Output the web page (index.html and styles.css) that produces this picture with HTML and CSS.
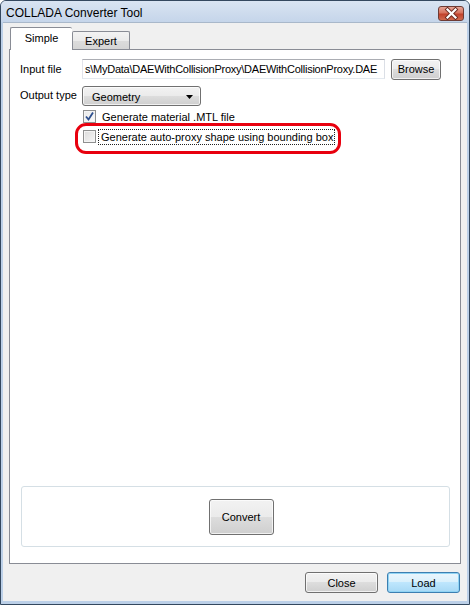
FILE: index.html
```html
<!DOCTYPE html>
<html>
<head>
<meta charset="utf-8">
<link rel="stylesheet" href="styles.css">
</head>
<body>
<div class="window">
  <div class="titlebar">
    <span class="title">COLLADA Converter Tool</span>
    <div class="close-x">
      <svg width="25" height="15" viewBox="0 0 25 15">
        <path d="M8.5 3.5 L16.5 11.5 M16.5 3.5 L8.5 11.5" stroke="#6b2a20" stroke-width="4" stroke-linecap="square"/>
        <path d="M8.5 3.5 L16.5 11.5 M16.5 3.5 L8.5 11.5" stroke="#ffffff" stroke-width="2.2" stroke-linecap="square"/>
      </svg>
    </div>
  </div>
  <div class="client">
    <div class="tabs">
      <div class="tab active">Simple</div>
      <div class="tab">Expert</div>
    </div>
    <div class="pane">
      <div class="row">
        <span class="label">Input file</span>
        <div class="textfield">s\MyData\DAEWithCollisionProxy\DAEWithCollisionProxy.DAE</div>
        <div class="btn browse">Browse</div>
      </div>
      <div class="row row2">
        <span class="label">Output type</span>
        <div class="combo">
          <span>Geometry</span>
          <svg width="7" height="4" viewBox="0 0 7 4"><path d="M0 0 H7 L3.5 4 Z" fill="#000"/></svg>
        </div>
      </div>
      <div class="check-row first">
        <span class="box checked">
          <svg width="11" height="11" viewBox="0 0 11 11"><path d="M2 5.5 L4.5 8.5 L9 1.5" stroke="#2d4f8e" stroke-width="1.8" fill="none"/></svg>
        </span>
        <span class="check-text">Generate material .MTL file</span>
      </div>
      <div class="check-row second">
        <span class="box"></span>
        <span class="check-text focus">Generate auto-proxy shape using bounding box</span>
        <div class="highlight"></div>
      </div>
      <div class="spacer"></div>
      <div class="group">
        <div class="btn convert">Convert</div>
      </div>
    </div>
    <div class="footer">
      <div class="btn footbtn">Close</div>
      <div class="btn footbtn default">Load</div>
    </div>
  </div>
</div>
</body>
</html>
```

FILE: styles.css
```css
html, body {
  margin: 0;
  padding: 0;
  background: #ffffff;
}

body {
  font-family: "Liberation Sans", Arial, sans-serif;
  font-size: 11px;
  color: #000;
}

.window {
  width: 470px;
  height: 605px;
  box-sizing: border-box;
  display: flex;
  flex-direction: column;
  background: #bcd0e8;
  border: 1px solid #34485f;
  border-radius: 6px 6px 0 0;
  padding: 0 2px 3px 2px;
}

.titlebar {
  height: 22px;
  display: flex;
  align-items: center;
  justify-content: space-between;
  margin: 0 -2px;
  padding: 0 5px 0 5px;
  background: linear-gradient(#d9e4f2, #c5d5ea);
  border-radius: 5px 5px 0 0;
}

.title {
  font-size: 12px;
  color: #000;
  padding-top: 2px;
}

.close-x {
  width: 26px;
  height: 15px;
  margin-top: 3px;
  margin-right: 0;
  box-sizing: border-box;
  border: 1px solid #6e3b34;
  border-radius: 3px;
  background: linear-gradient(#e6a596 0%, #d7725d 45%, #c2412b 55%, #cf6a4f 100%);
  display: flex;
  align-items: center;
  justify-content: center;
  overflow: hidden;
}

.close-x svg {
  display: block;
  margin: -1px;
}

.client {
  flex: 1;
  display: flex;
  flex-direction: column;
  background: #f0f0f0;
  padding: 0 6px 8px 6px;
  border-top: 1px solid #a9b8ca;
}

.tabs {
  display: flex;
  align-items: flex-end;
  height: 20px;
  margin-top: 6px;
  padding-left: 1px;
  position: relative;
  z-index: 2;
}

.tab {
  box-sizing: border-box;
  height: 18px;
  width: 58px;
  border: 1px solid #898c95;
  border-bottom: none;
  border-radius: 2px 2px 0 0;
  background: linear-gradient(#f3f3f3, #ebebeb 50%, #dcdcdc 51%, #d5d5d5);
  display: flex;
  align-items: center;
  justify-content: center;
  padding-top: 1px;
}

.tab.active {
  width: 62px;
  height: 23px;
  margin-bottom: -1px;
  background: #ffffff;
  padding-bottom: 3px;
  border-right: none;
}

.pane {
  height: 515px;
  box-sizing: border-box;
  border: 1px solid #898c95;
  background: #ffffff;
  padding: 9px 10px 16px 10px;
  display: flex;
  flex-direction: column;
}

.row {
  display: flex;
  align-items: center;
  height: 20px;
}

.row2 {
  margin-top: 7px;
}

.label {
  width: 62px;
  flex: none;
}

.row2 .label {
  margin-top: -2px;
}

.textfield {
  box-sizing: border-box;
  width: 303px;
  height: 20px;
  border: 1px solid #abadb3;
  border-left-color: #e2e3ea;
  border-right-color: #dbdfe6;
  border-bottom-color: #e3e9ef;
  background: #fff;
  padding: 0 2px;
  display: flex;
  align-items: center;
  letter-spacing: -0.25px;
  white-space: nowrap;
  overflow: hidden;
}

.btn {
  box-sizing: border-box;
  border: 1px solid #707070;
  border-radius: 3px;
  background: linear-gradient(#f2f2f2 0%, #ebebeb 49%, #dddddd 50%, #cfcfcf 100%);
  box-shadow: inset 0 0 0 1px rgba(255,255,255,0.7);
  display: flex;
  align-items: center;
  justify-content: center;
  font-size: 11px;
}

.browse {
  width: 50px;
  height: 21px;
  margin-left: 6px;
}

.combo {
  box-sizing: border-box;
  width: 119px;
  height: 20px;
  border: 1px solid #707070;
  border-radius: 3px;
  background: linear-gradient(#f2f2f2 0%, #ebebeb 49%, #dddddd 50%, #cfcfcf 100%);
  box-shadow: inset 0 0 0 1px rgba(255,255,255,0.7);
  display: flex;
  align-items: center;
  justify-content: space-between;
  padding: 1px 7px 0 9px;
}

.combo svg {
  display: block;
  margin-top: 1px;
}

.check-row {
  display: flex;
  align-items: center;
  height: 13px;
  margin-left: 63px;
  position: relative;
}

.check-row.first {
  margin-top: 4px;
}

.check-row.second {
  margin-top: 7px;
}

.box {
  box-sizing: border-box;
  width: 13px;
  height: 13px;
  border: 1px solid #8e8f8f;
  background: linear-gradient(135deg, #dcdcdc, #f6f6f6);
  box-shadow: inset 0 0 0 1px #f4f4f4;
  display: flex;
  align-items: center;
  justify-content: center;
  flex: none;
}

.box.checked {
  background: linear-gradient(135deg, #e8e8e8, #fbfbfb);
}

.box svg {
  display: block;
}

.check-text {
  margin-left: 6px;
}

.check-text.focus {
  margin-left: 2px;
  border: 1px dotted #222;
  padding: 1px 1px 1px 2px;
}

.highlight {
  position: absolute;
  left: -8px;
  top: -7px;
  width: 266px;
  height: 31px;
  box-sizing: border-box;
  border: 3px solid #e8000e;
  border-radius: 11px;
  pointer-events: none;
}

.spacer {
  flex: 1;
}

.group {
  height: 61px;
  box-sizing: border-box;
  margin-left: 1px;
  border: 1px solid #d5dfe5;
  border-radius: 3px;
  display: flex;
  align-items: center;
  justify-content: center;
  padding-left: 11px;
}

.convert {
  width: 65px;
  height: 36px;
}

.footer {
  display: flex;
  justify-content: flex-end;
  gap: 9px;
  margin-top: 8px;
  padding-right: 1px;
}

.footbtn {
  width: 73px;
  height: 21px;
}

.footbtn.default {
  border-color: #3c7fb1;
  background: linear-gradient(#eaf6fd 0%, #d9f0fc 49%, #bee6fd 50%, #a7d9f5 100%);
  box-shadow: inset 0 0 0 1px #90d4f4;
}
```
